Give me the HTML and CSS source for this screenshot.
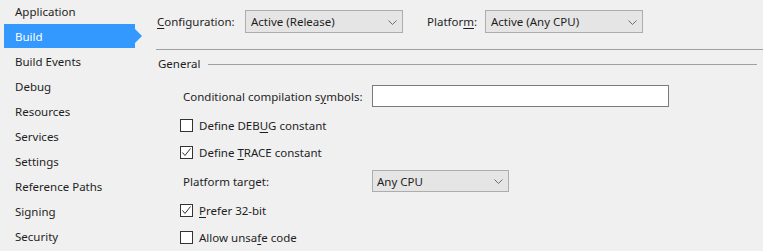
FILE: index.html
```html
<!DOCTYPE html>
<html>
<head>
<meta charset="utf-8">
<link rel="stylesheet" href="styles.css">
</head>
<body>
<nav class="sidebar">
  <div class="nav-item">Application</div>
  <div class="nav-item active">Build</div>
  <div class="nav-item">Build Events</div>
  <div class="nav-item">Debug</div>
  <div class="nav-item">Resources</div>
  <div class="nav-item">Services</div>
  <div class="nav-item">Settings</div>
  <div class="nav-item">Reference Paths</div>
  <div class="nav-item">Signing</div>
  <div class="nav-item">Security</div>
</nav>
<main class="main">
  <div class="topbar">
    <span class="top-label cfg-label"><u>C</u>onfiguration:</span>
    <div class="combo combo-top"><span>Active (Release)</span><svg class="chev" width="9" height="5" viewBox="0 0 9 5"><polyline points="0.5,0.5 4.5,4.5 8.5,0.5" fill="none" stroke="#6d6d6d" stroke-width="1"/></svg></div>
    <span class="top-label plat-label">Platfor<u>m</u>:</span>
    <div class="combo combo-top"><span>Active (Any CPU)</span><svg class="chev" width="9" height="5" viewBox="0 0 9 5"><polyline points="0.5,0.5 4.5,4.5 8.5,0.5" fill="none" stroke="#6d6d6d" stroke-width="1"/></svg></div>
  </div>
  <div class="separator"></div>
  <div class="group-head"><span>General</span><div class="group-line"></div></div>
  <div class="rows">
    <div class="row">
      <span class="field-label">Conditional compilation s<u>y</u>mbols:</span>
      <div class="textbox"></div>
    </div>
    <div class="row check">
      <span class="box"></span><span>Define DEB<u>U</u>G constant</span>
    </div>
    <div class="row check">
      <span class="box"><svg width="11" height="11" viewBox="0 0 11 11"><polyline points="1.5,5.5 4,8.5 9.5,1.5" fill="none" stroke="#333" stroke-width="1"/></svg></span><span>Define <u>T</u>RACE constant</span>
    </div>
    <div class="row">
      <span class="field-label">Platform target:</span>
      <div class="combo combo-target"><span>Any CPU</span><svg class="chev" width="9" height="5" viewBox="0 0 9 5"><polyline points="0.5,0.5 4.5,4.5 8.5,0.5" fill="none" stroke="#6d6d6d" stroke-width="1"/></svg></div>
    </div>
    <div class="row check">
      <span class="box"><svg width="11" height="11" viewBox="0 0 11 11"><polyline points="1.5,5.5 4,8.5 9.5,1.5" fill="none" stroke="#333" stroke-width="1"/></svg></span><span><u>P</u>refer 32-bit</span>
    </div>
    <div class="row check">
      <span class="box"></span><span>Allow unsa<u>f</u>e code</span>
    </div>
  </div>
</main>
</body>
</html>
```
FILE: styles.css
```css
html, body {
  margin: 0;
  padding: 0;
}
body {
  background: #f0f0f0;
  font-family: "Noto Sans", "Open Sans", sans-serif;
  font-size: 11.5px;
  color: #1e1e1e;
  display: flex;
  width: 763px;
  height: 251px;
  overflow: hidden;
}
u {
  text-decoration: underline;
  text-underline-offset: 2px;
}
.sidebar {
  width: 142px;
  flex: none;
  margin-top: -1px;
}
.nav-item {
  position: relative;
  height: 24px;
  line-height: 26px;
  margin: 0 0 1px 4px;
  width: 131px;
  padding-left: 11px;
  box-sizing: border-box;
  color: #1e1e1e;
}
.nav-item.active {
  background: #3399ff;
  color: #fff;
}
.nav-item.active::after {
  content: "";
  position: absolute;
  left: 131px;
  top: 5px;
  border-left: 7px solid #3399ff;
  border-top: 7px solid transparent;
  border-bottom: 7px solid transparent;
}
.main {
  flex: 1;
  min-width: 0;
}
.topbar {
  display: flex;
  align-items: center;
  padding: 10px 0 0 15px;
  height: 23px;
}
.top-label {
  flex: none;
}
.cfg-label {
  width: 88px;
}
.plat-label {
  width: 58px;
  margin-left: 24px;
}
.combo {
  box-sizing: border-box;
  height: 23px;
  border: 1px solid #adadad;
  background: #e5e5e5;
  display: flex;
  align-items: center;
  justify-content: space-between;
  padding: 0 5px 0 5px;
  flex: none;
}
.combo-top {
  width: 158px;
}
.combo-target {
  width: 137px;
  height: 22px;
  padding-left: 4px;
}
.chev {
  display: block;
  margin-top: 1px;
}
.separator {
  height: 1px;
  background: #a0a0a0;
  margin: 16px 0 0 14px;
}
.group-head {
  display: flex;
  align-items: center;
  margin: 6px 6px 0 16px;
  height: 16px;
  line-height: 16px;
}
.group-line {
  flex: 1;
  height: 1px;
  background: #a0a0a0;
  margin-left: 8px;
}
.rows {
  margin-top: 13px;
}
.row {
  display: flex;
  align-items: center;
  height: 22px;
  padding-left: 41px;
}
.row + .row {
  margin-top: 7px;
}
.row.check + .row.check {
  margin-top: 5px;
}
.row.check {
  padding-left: 38px;
}
.field-label {
  width: 189px;
  flex: none;
}
.textbox {
  box-sizing: border-box;
  width: 297px;
  height: 22px;
  background: #fff;
  border: 1px solid #7a7a7a;
}
.box {
  box-sizing: border-box;
  width: 13px;
  height: 13px;
  border: 1px solid #333;
  background: #fff;
  margin-right: 6px;
  flex: none;
  display: flex;
  align-items: center;
  justify-content: center;
}
.box svg {
  display: block;
}
```
